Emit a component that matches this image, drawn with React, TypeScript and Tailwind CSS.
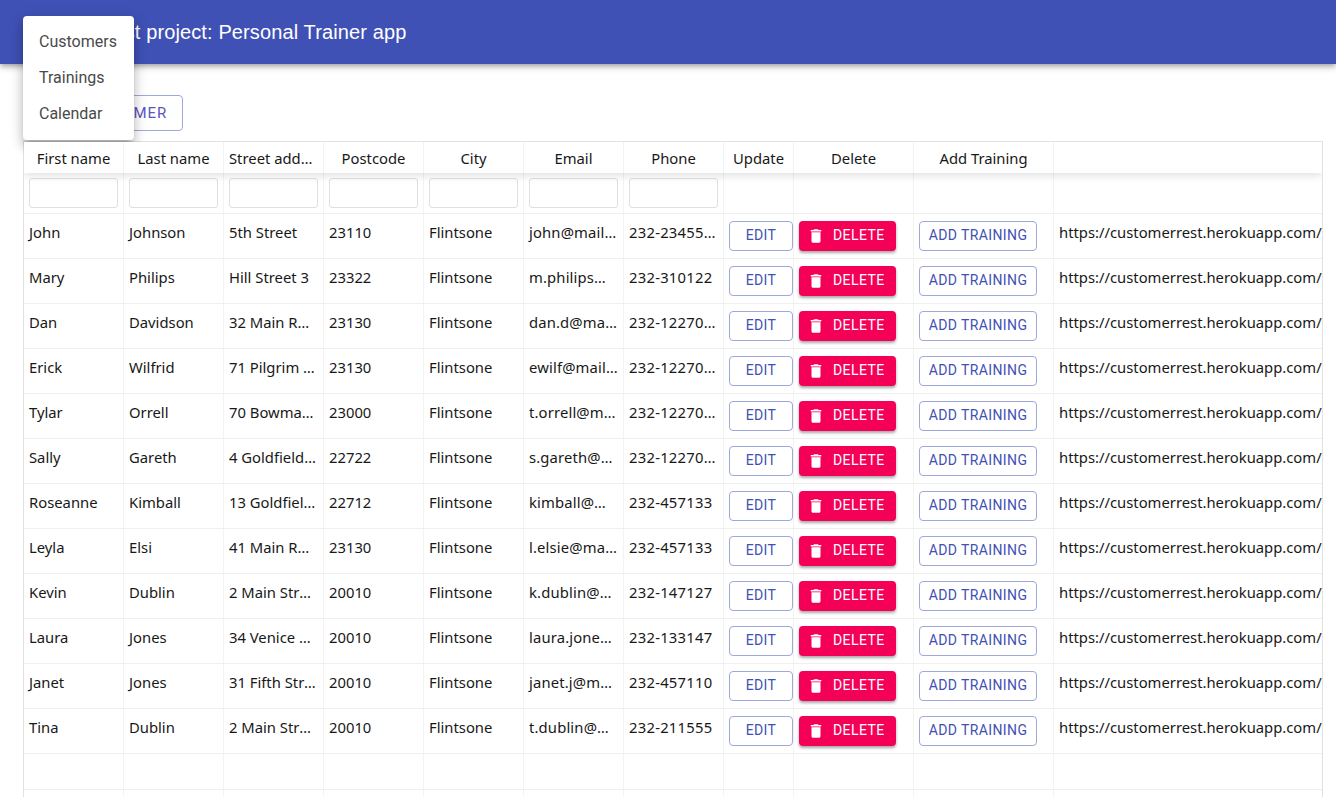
type Customer = {
	first: string;
	last: string;
	street: string;
	postcode: string;
	email: string;
	phone: string;
};

const customers: Customer[] = [
	{ first: "John", last: "Johnson", street: "5th Street", postcode: "23110", email: "john@mail.com", phone: "232-2345566" },
	{ first: "Mary", last: "Philips", street: "Hill Street 3", postcode: "23322", email: "m.philips@mail.com", phone: "232-310122" },
	{ first: "Dan", last: "Davidson", street: "32 Main Road", postcode: "23130", email: "dan.d@mail.com", phone: "232-1227045" },
	{ first: "Erick", last: "Wilfrid", street: "71 Pilgrim Avenue", postcode: "23130", email: "ewilf@mail.com", phone: "232-1227045" },
	{ first: "Tylar", last: "Orrell", street: "70 Bowman Street", postcode: "23000", email: "t.orrell@mail.com", phone: "232-1227045" },
	{ first: "Sally", last: "Gareth", street: "4 Goldfield Road", postcode: "22722", email: "s.gareth@mail.com", phone: "232-1227045" },
	{ first: "Roseanne", last: "Kimball", street: "13 Goldfield Road", postcode: "22712", email: "kimball@mail.com", phone: "232-457133" },
	{ first: "Leyla", last: "Elsi", street: "41 Main Road", postcode: "23130", email: "l.elsie@mail.com", phone: "232-457133" },
	{ first: "Kevin", last: "Dublin", street: "2 Main Street", postcode: "20010", email: "k.dublin@mail.com", phone: "232-147127" },
	{ first: "Laura", last: "Jones", street: "34 Venice Street", postcode: "20010", email: "laura.jones@mail.com", phone: "232-133147" },
	{ first: "Janet", last: "Jones", street: "31 Fifth Street", postcode: "20010", email: "janet.j@mail.com", phone: "232-457110" },
	{ first: "Tina", last: "Dublin", street: "2 Main Street", postcode: "20010", email: "t.dublin@mail.com", phone: "232-211555" },
];

const headers = [
	{ label: "First name", width: "w-[100px]" },
	{ label: "Last name", width: "w-[100px]" },
	{ label: "Street address", width: "w-[100px]" },
	{ label: "Postcode", width: "w-[100px]" },
	{ label: "City", width: "w-[100px]" },
	{ label: "Email", width: "w-[100px]" },
	{ label: "Phone", width: "w-[100px]" },
	{ label: "Update", width: "w-[70px]" },
	{ label: "Delete", width: "w-[120px]" },
	{ label: "Add Training", width: "w-[140px]" },
	{ label: "", width: "flex-1" },
];

function TextCell({ children, className = "" }: { children: string; className?: string }) {
	return (
		<div
			className={`w-[100px] shrink-0 truncate border-r border-[#f3f3f3] px-[5px] pt-[6px] leading-[24px] ${className}`}
		>
			{children}
		</div>
	);
}

function OutlineButton({ children, width }: { children: string; width: string }) {
	return (
		<div
			className={`flex h-[30px] ${width} items-center justify-center rounded-[4px] border border-[#9fa8da] pb-[2px] font-['Roboto'] text-[14px] tracking-[0.4px] text-[#3f51b5]`}
		>
			{children}
		</div>
	);
}

function Row({ customer }: { customer: Customer }) {
	return (
		<div className="flex h-[45px] border-b border-[#efefef]">
			<TextCell>{customer.first}</TextCell>
			<TextCell>{customer.last}</TextCell>
			<TextCell>{customer.street}</TextCell>
			<TextCell>{customer.postcode}</TextCell>
			<TextCell>Flintsone</TextCell>
			<TextCell className="tracking-[0.15px]">{customer.email}</TextCell>
			<TextCell className="tracking-[0.25px]">{customer.phone}</TextCell>
			<div className="w-[70px] shrink-0 border-r border-[#f3f3f3] pt-[7px] pl-[5px]">
				<OutlineButton width="w-[64px]">EDIT</OutlineButton>
			</div>
			<div className="w-[120px] shrink-0 border-r border-[#f3f3f3] pt-[7px] pl-[5px]">
				<div className="flex h-[30px] w-[97px] items-center rounded-[4px] bg-[#f50057] pb-[2px] pl-[8px] font-['Roboto'] text-[14px] tracking-[0.4px] text-white shadow-[0_2px_3px_rgba(0,0,0,0.35)]">
					<svg viewBox="0 0 24 24" className="mt-[2px] mr-[8px] h-[18px] w-[18px] fill-white">
						<path d="M6 19c0 1.1.9 2 2 2h8c1.1 0 2-.9 2-2V7H6v12zM19 4h-3.5l-1-1h-5l-1 1H5v2h14V4z" />
					</svg>
					DELETE
				</div>
			</div>
			<div className="w-[140px] shrink-0 border-r border-[#f3f3f3] pt-[7px] pl-[5px]">
				<OutlineButton width="w-[118px]">ADD TRAINING</OutlineButton>
			</div>
			<div className="flex-1 overflow-hidden whitespace-nowrap px-[5px] pt-[6px] leading-[24px]">
				https://customerrest.herokuapp.com/api/customers/1
			</div>
		</div>
	);
}

export default function App() {
	return (
		<div className="relative h-[797px] w-[1336px] overflow-hidden bg-white">
			<header className="flex h-[64px] items-center bg-[#3f51b5] pl-[101px] font-['Liberation_Sans'] text-[20px] tracking-[0.12px] text-white shadow-[0_2px_4px_-1px_rgba(0,0,0,0.2),0_4px_5px_0_rgba(0,0,0,0.14),0_1px_10px_0_rgba(0,0,0,0.12)]">
				First project: Personal Trainer app
			</header>

			<div className="pt-[31px] pl-[24px]">
				<div className="flex h-[36px] w-[159px] items-center justify-center rounded-[4px] border border-[#9fa8da] pl-[5px] font-['Roboto'] text-[15px] tracking-[0.9px] text-[#5c55c0]">
					ADD CUSTOMER
				</div>
			</div>

			<div className="mt-[10px] ml-[23px] w-[1300px] overflow-hidden border border-[#e2e2e2] font-['Noto_Sans',sans-serif] text-[14.8px] text-[#181818]">
				<div className="relative z-10 flex h-[31px] bg-white shadow-[0_2px_10px_rgba(0,0,0,0.14)]">
					{headers.map((h) => (
						<div
							key={h.label}
							className={`${h.width} shrink-0 truncate border-r border-[#f3f3f3] px-[5px] text-center leading-[32px] last:border-r-0`}
						>
							{h.label}
						</div>
					))}
				</div>
				<div className="flex h-[41px] border-b border-[#efefef]">
					{headers.map((h, i) => (
						<div
							key={h.label}
							className={`${h.width} shrink-0 border-r border-[#f3f3f3] px-[5px] pt-[5px] last:border-r-0`}
						>
							{i < 7 && (
								<div className="h-[30px] rounded-[3px] border border-[#e0e0e0] bg-white" />
							)}
						</div>
					))}
				</div>
				{customers.map((c) => (
					<Row key={c.first + c.last} customer={c} />
				))}
				<div className="flex h-[36px] border-b border-[#efefef]">
					{headers.map((h) => (
						<div key={h.label} className={`${h.width} shrink-0 border-r border-[#f3f3f3] last:border-r-0`} />
					))}
				</div>
				<div className="flex h-[20px]">
					{headers.map((h) => (
						<div key={h.label} className={`${h.width} shrink-0 border-r border-[#f3f3f3] last:border-r-0`} />
					))}
				</div>
			</div>

			<div className="absolute top-[16px] left-[23px] w-[111px] rounded-[4px] bg-white py-[8px] font-['Roboto'] text-[16px] text-[#4a4a4a] shadow-[0_5px_5px_-3px_rgba(0,0,0,0.2),0_8px_10px_1px_rgba(0,0,0,0.14),0_3px_14px_2px_rgba(0,0,0,0.12)]">
				<div className="px-[16px] leading-[36px]">Customers</div>
				<div className="px-[16px] leading-[36px]">Trainings</div>
				<div className="px-[16px] leading-[36px]">Calendar</div>
			</div>
		</div>
	);
}
